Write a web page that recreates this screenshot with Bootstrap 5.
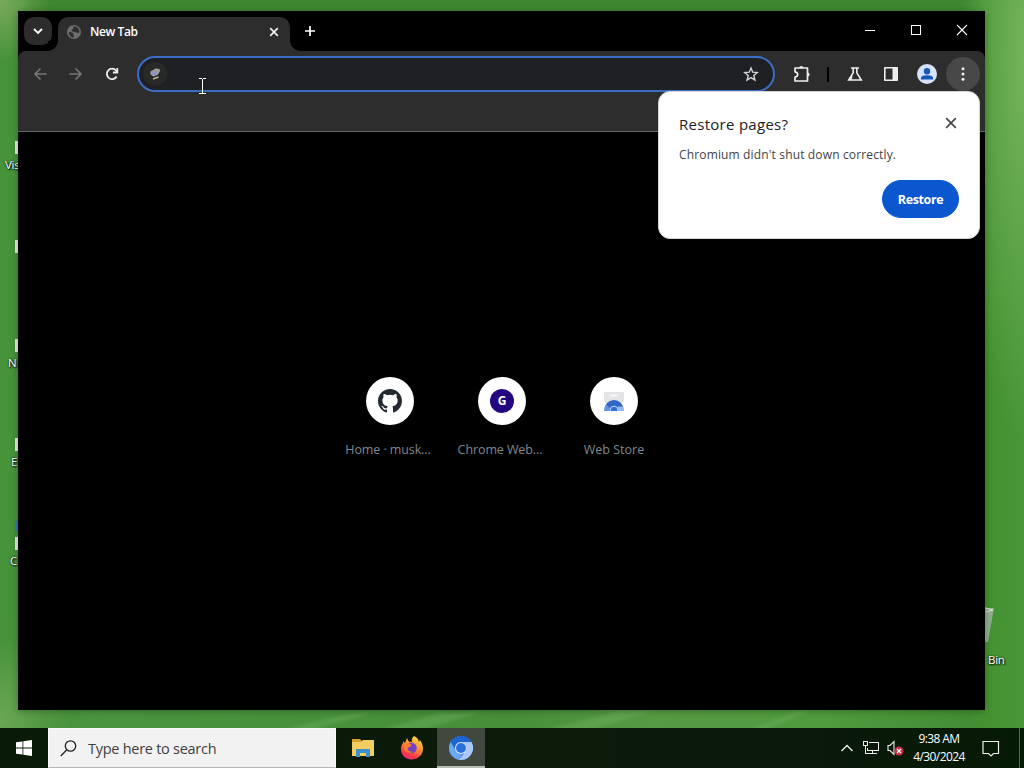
<!DOCTYPE html>
<html lang="en">
<head>
<meta charset="utf-8">
<meta name="viewport" content="width=device-width, initial-scale=1">
<title>New Tab</title>
<link href="https://cdn.jsdelivr.net/npm/bootstrap@5.3.0/dist/css/bootstrap.min.css" rel="stylesheet">
<style>
body{width:1024px;height:768px;font-family:"Open Sans","Noto Sans",sans-serif;font-size:13px;line-height:18px;color:#fff}
svg{display:block;flex:none}
.desktop{width:1024px;height:768px;background:
 radial-gradient(ellipse 50px 60px at 0 0,#7aa95c,transparent),
 radial-gradient(ellipse 65px 380px at 1024px 60px,#74b35b,transparent),
 linear-gradient(90deg,#47933a 0,#47933a 20px,#3f882f 30px,#3f882f 970px,#43902f 985px,#489639 1024px)}
.lower-glow{left:0;top:620px;width:1024px;height:108px;background:
 radial-gradient(ellipse 70px 80px at 0 100px,#6aa654,transparent),
 linear-gradient(90deg,transparent,#4b943f 8%,#478f39 50%,#569a43 64%,#4f9b3e 80%,transparent)}
.window{left:18px;top:11px;width:967px;height:699px;background:#000;box-shadow:0 1px 7px rgba(0,0,0,.3)}
.tabstrip{height:40px;padding:6px 0 0 6px}
.tab-search{width:28px;height:28px;border-radius:10px;background:#2c2c2c}
.active-tab{width:232px;height:34px;margin-left:6px;border-radius:10px 10px 0 0;background:#2d2d2d;padding:0 9px 5px;font-weight:600;font-size:12px}
.active-tab::before,.active-tab::after{content:"";position:absolute;bottom:0;width:10px;height:10px}
.active-tab::before{left:-10px;background:radial-gradient(circle at 0 0,#000 9.5px,#2d2d2d 10px)}
.active-tab::after{right:-10px;background:radial-gradient(circle at 100% 0,#000 9.5px,#2d2d2d 10px)}
.tab-title{letter-spacing:-.42px;margin-left:9px;padding-top:1px}
.toolbar{height:81px;background:#2d2d2d;border-bottom:1px solid #646464;border-radius:8px 8px 0 0}
.tool-row{height:46px;padding:0 5px 0 14px}
.omnibox{width:638px;height:36px;border:2px solid #3b6dc4;border-radius:18px;background:#1e2023;padding:0 14px 0 5px}
.site-chip{width:24px;height:24px;background:#292929}
.menu-btn{width:34px;height:34px;background:#484848}
.bubble{right:5px;top:80px;width:322px;height:148px;border-radius:12px;background:#fff;border:1px solid #d5d5d5;color:#25272a;padding:20px 20px 20px}
.bubble h1{font-size:15px;line-height:24px;font-weight:400;letter-spacing:.28px;margin:0;color:#202124}
.bubble p{font-size:12px;line-height:18px;letter-spacing:.15px;margin:10px 0 16px;color:#404347}
.restore{width:77px;height:38px;padding:2px 0 0;--bs-btn-bg:#0b57d0;--bs-btn-border-color:#0b57d0;--bs-btn-color:#fff;font-size:12.5px;font-weight:700;letter-spacing:-.4px}
.shortcuts{padding-top:245px;margin-left:316px}
.shortcut{width:112px;color:#7f8890;font-size:12.5px}
.shortcut .tight{margin-left:-4px;letter-spacing:-.1px}
.disc{width:48px;height:48px;background:#fff;margin-bottom:16px}
.letter{width:24px;height:24px;background:#240680;color:#fff;font-size:12px;font-weight:700}
.taskbar{left:0;top:728px;width:1024px;height:40px;background:linear-gradient(90deg,#081a08,#0c1b09 45%,#0b190b 75%,#051a05)}
.start{width:48px}
.searchbox{width:288px;background:#f2f2f2;border:1px solid #fafafa;border-bottom-color:#b5b5b5;color:#404040;font-size:14.5px;padding-left:11px}
.searchbox span{margin-left:11px;letter-spacing:-.27px;padding-top:2px}
.task{width:48px}
.task-on{background:#41493f;border-bottom:2px solid #b7bdb6}
.clock{width:60px;font-size:12px;line-height:18px;letter-spacing:-.58px;white-space:nowrap}
.desk-label{font-size:11.5px;line-height:16px;letter-spacing:-.3px;text-shadow:1px 1px 2px #000,0 0 2px #000}
.stub{width:4px;height:13px;background:#e6ece3;left:15px}
</style>
</head>
<body>
<main class="desktop position-relative overflow-hidden">
  <div class="lower-glow position-absolute"></div>
  <svg class="position-absolute" style="left:0;top:706px" width="1024" height="24" viewBox="0 0 1024 24">
    <defs><filter id="soft"><feGaussianBlur stdDeviation="3 1.5"/></filter></defs>
    <path fill="#72b463" opacity=".4" filter="url(#soft)" d="M280 24 350 8h20L310 24zM380 24l60-17h40L420 24zM545 24 620 5h35L590 24zM750 24 795 5h15L765 24z"/>
  </svg>
  <i class="stub position-absolute" style="top:141px"></i><i class="stub position-absolute" style="top:240px"></i><i class="stub position-absolute" style="top:339px"></i><i class="stub position-absolute" style="top:438px"></i><i class="stub position-absolute" style="top:537px"></i>
  <span class="desk-label position-absolute" style="left:5px;top:157px">Vis</span>
  <span class="desk-label position-absolute" style="left:8px;top:355px">N</span>
  <span class="desk-label position-absolute" style="left:11px;top:454px">E</span>
  <span class="desk-label position-absolute" style="left:10px;top:553px">C</span>
  <svg class="position-absolute" style="left:14px;top:515px" width="8" height="22"><circle cx="12" cy="11" r="11" fill="#3478bd"/></svg>
  <svg class="position-absolute" style="left:974px;top:606px" width="22" height="38"><path fill="#8fae8f" d="M0 2h20l-6 34H0z"/><path fill="none" stroke="#dbe7da" d="m8 1 11 3-7 2"/></svg>

  <section class="window position-absolute">
    <header class="tabstrip d-flex align-items-start">
      <div class="tab-search d-flex align-items-center justify-content-center"><svg width="12" height="12" fill="none" stroke="#fff" stroke-width="1.8"><path d="m2 4 4 4 4-4"/></svg></div>
      <div class="active-tab position-relative d-flex align-items-center">
        <svg width="14" height="14" viewBox="0 0 14 14"><circle cx="7" cy="7" r="7" fill="#6c6d6e"/><path fill="#2f2f2f" d="M2 7c3-.2 4.500 1 4.300 2.300-.2 1 .8.900.7 3.200C3.600 12.300 1.500 10 2 7zM6 1.500l3.300.2C11.500 2.800 12.700 5 12.300 7.600 10 8.400 9 7 7 6.800 4.800 6.500 4 5 5.500 4.200 6.700 3.500 6.800 2.700 6 1.500z"/></svg>
        <span class="tab-title me-auto">New Tab</span>
        <svg width="14" height="14" fill="none" stroke="#f1f1f1" stroke-width="1.7"><path d="m3.200 3.200 7.600 7.600m0-7.600-7.600 7.600"/></svg>
      </div>
      <svg width="12" height="12" class="mt-2" style="margin-left:14px" fill="none" stroke="#fff" stroke-width="1.7"><path d="M6 1v10M1 6h10"/></svg>
      <div class="ms-auto d-flex align-items-center" style="gap:34px;padding:7px 17px 0 0">
        <svg width="12" height="12" shape-rendering="crispEdges"><path fill="#fff" d="M1 6h10v1H1z"/></svg>
        <svg width="12" height="12" fill="none" stroke="#fff" shape-rendering="crispEdges"><path d="M1.500 1.500h9v9h-9z"/></svg>
        <svg width="12" height="12" fill="none" stroke="#fff" stroke-width="1.1"><path d="m1 1 10 10M11 1 1 11"/></svg>
      </div>
    </header>
    <div class="toolbar">
      <div class="tool-row d-flex align-items-center">
        <svg width="16" height="16" fill="none" stroke="#777" stroke-width="1.6"><path d="M14.500 8H3m5.500-5.500L3 8l5.500 5.500"/></svg>
        <svg width="16" height="16" style="margin-left:20px" fill="none" stroke="#777" stroke-width="1.6"><path d="M1.500 8H13M7.500 2.500 13 8l-5.500 5.500"/></svg>
        <svg width="16" height="16" style="margin-left:20px" fill="none" stroke="#eee" stroke-width="1.8"><path d="M12.600 10.500A5.200 5.200 0 1 1 12 4.500L13.300 6"/><path d="M13.300 2v4.500H8.900"/></svg>
        <div class="omnibox d-flex align-items-center justify-content-between" style="margin-left:17px">
          <span class="site-chip rounded-circle d-flex align-items-center justify-content-center" style="margin-left:-1px"><svg width="14" height="14" viewBox="0 0 14 14"><path fill="#a3a493" d="m2.500 4.500 5-3 4 .5.500 2-2 3.500-4.500 2-3-2z"/><circle cx="6.500" cy="6" r="2.700" fill="#8d97bd"/><path fill="none" stroke="#b5b496" stroke-width="1.500" d="m5 12 5.500-2"/></svg></span>
          <svg width="16" height="16" viewBox="0 0 16 16" fill="none" stroke="#d3d5d7" stroke-width="1.400" stroke-linejoin="miter"><path d="m8 2 1.750 4.200 4.550.35-3.500 2.950 1.100 4.500L8 11.600 4.100 14l1.100-4.500-3.500-2.950 4.550-.35z"/></svg>
        </div>
        <svg width="18" height="18" viewBox="0 0 18 18" style="margin-left:18px" fill="none" stroke="#eee" stroke-width="1.700"><path stroke-linejoin="round" d="M2 3h12.500v13H2v-3.800q2.700-.5 2.700-2.700T2 6.800z"/><path fill="#eee" stroke="none" d="M6.200 3a2.100 2 0 0 1 4.200 0zM14.500 7.400a2.100 2.100 0 0 1 0 4.200z"/></svg>
        <span style="width:2px;height:15px;background:#000;margin-left:16px"></span>
        <svg width="16" height="16" style="margin-left:18px" fill="none" stroke="#eee" stroke-width="1.600"><path d="M4 2h8M6.200 2v4.800L1.700 14h12.600L9.800 6.800V2M5 10.500l-1.500 3"/></svg>
        <svg width="16" height="16" style="margin-left:20px"><path fill="none" stroke="#eee" stroke-width="1.600" stroke-linejoin="round" d="M1.800 1.800h12.400v12.400H1.800z"/><path fill="#eee" d="M9.500 1.500H14v13H9.500z"/></svg>
        <svg width="20" height="20" style="margin-left:18px"><circle cx="10" cy="10" r="10" fill="#d5e3fb"/><circle cx="10" cy="7.200" r="3.200" fill="#1858bd"/><path fill="#1858bd" d="M4 15.500v-1.800c0-3.300 12-3.300 12 0v1.800z"/></svg>
        <span class="menu-btn rounded-circle d-flex align-items-center justify-content-center ms-auto"><svg width="4" height="16" fill="#eee"><circle cx="2" cy="2.800" r="1.500"/><circle cx="2" cy="8" r="1.500"/><circle cx="2" cy="13.200" r="1.500"/></svg></span>
      </div>
    </div>
    <div class="shortcuts d-flex">
      <div class="shortcut d-flex flex-column align-items-center"><div class="disc rounded-circle d-flex align-items-center justify-content-center"><svg width="24" height="24" viewBox="0 0 16 16" fill="#24292f"><path d="M8 0C3.580 0 0 3.580 0 8c0 3.540 2.290 6.530 5.470 7.590.4.070.55-.17.55-.38 0-.19-.01-.82-.01-1.490-2.010.37-2.530-.49-2.690-.94-.09-.23-.48-.94-.82-1.130-.28-.15-.68-.52-.01-.53.63-.01 1.080.58 1.230.82.72 1.210 1.870.87 2.330.66.07-.52.28-.87.51-1.070-1.780-.2-3.640-.89-3.640-3.950 0-.87.31-1.590.82-2.150-.08-.2-.36-1.020.08-2.120 0 0 .67-.21 2.200.82a7.700 7.700 0 0 1 4 0c1.530-1.040 2.200-.82 2.200-.82.44 1.100.16 1.920.08 2.120.51.56.82 1.270.82 2.150 0 3.070-1.870 3.750-3.650 3.950.29.25.54.73.54 1.480 0 1.070-.01 1.930-.01 2.200 0 .21.15.46.55.38A8 8 0 0 0 16 8c0-4.420-3.580-8-8-8z"/></svg></div><span class="tight">Home · musk...</span></div>
      <div class="shortcut d-flex flex-column align-items-center"><div class="disc rounded-circle d-flex align-items-center justify-content-center"><span class="letter rounded-circle d-flex align-items-center justify-content-center">G</span></div><span class="tight">Chrome Web...</span></div>
      <div class="shortcut d-flex flex-column align-items-center"><div class="disc rounded-circle d-flex align-items-center justify-content-center"><svg width="24" height="24" viewBox="0 0 24 24"><path fill="#e4e4e6" d="M2 3h20v8l-1 3H3l-1-3z"/><rect x="8" y="5.500" width="8" height="2" rx="1" fill="#f8f8f8"/><path fill="#2f66c8" d="M2.500 22v-1.500a9.500 9.500 0 0 1 19 0V22z"/><path fill="#5c95ea" d="M2.500 22v-1.500a9.500 9.500 0 0 1 1.600-5.300L8.500 20v2z"/><path fill="#8fb8f2" d="M15.500 17.500h5.400q.6 1.500.6 4.500H16z"/><path fill="#2f6cd6" stroke="#c3d8f8" d="M8.200 22v-1a3.800 3.800 0 0 1 7.600 0v1"/></svg></div><span>Web Store</span></div>
    </div>
    <aside class="bubble position-absolute">
      <div class="d-flex justify-content-between"><h1>Restore pages?</h1><svg width="14" height="14" style="margin:4px 1px 0 0" fill="none" stroke="#46484a" stroke-width="1.700"><path d="m2.200 2.200 9.600 9.600m0-9.600-9.600 9.600"/></svg></div>
      <p>Chromium didn't shut down correctly.</p>
      <div class="d-flex justify-content-end"><button class="btn restore rounded-pill">Restore</button></div>
    </aside>
  </section>
  <svg class="position-absolute" style="left:197px;top:78px" width="11" height="17" fill="none" stroke="#fff" shape-rendering="crispEdges"><path d="M2 .5h2.500l1 1 1-1H9M5.500 1v14M2 15.500h7"/></svg>

  <footer class="taskbar position-absolute d-flex">
    <div class="start d-flex align-items-center justify-content-center"><svg width="16" height="16" fill="#fff"><path d="m0 2.300 6.500-.9v6.100H0zM7.300 1.300 16 0v7.500H7.300zM0 8.400h6.500v6.200L0 13.700zM7.300 8.400H16V16l-8.700-1.300z"/></svg></div>
    <div class="searchbox d-flex align-items-center"><svg width="17" height="17" fill="none" stroke="#222" stroke-width="1.300"><circle cx="10.500" cy="6" r="5.200"/><path d="M6.800 9.800.8 16"/></svg><span>Type here to search</span></div>
    <div class="task d-flex align-items-center justify-content-center" style="margin-left:3px"><svg width="22" height="20"><path fill="#d99d2e" d="M0 1h8l2 2h11v5H0z"/><path fill="#f3cd62" d="M0 4h9l2-2h11v16H0z"/><path fill="#3c91ca" d="M4 11h14v8h-4v-4H8v4H4z"/></svg></div>
    <div class="task d-flex align-items-center justify-content-center" style="margin-left:1px"><svg width="24" height="24" viewBox="0 0 24 24"><defs><linearGradient id="fox" x1=".8" y1="0" x2=".3" y2="1"><stop stop-color="#ffe34b"/><stop offset=".45" stop-color="#ff9132"/><stop offset=".8" stop-color="#ff3847"/><stop offset="1" stop-color="#e52d7e"/></linearGradient></defs><path fill="url(#fox)" d="M14 0c4 2 4.500 4 5 6l1-2c4 6 4 12 0 16-7 7-19 3-19-7 0-3 1-5 2-6V5l2 2 2-5 2 4c2-.5 3 .5 3.500 1C11 4 12 2 14 0z"/><circle cx="11.500" cy="12" r="5.200" fill="#7140c5"/><path fill="#ff7d30" d="M4 8c4-1 5 0 8 .5L10 11c-2 0-3 1-2 3 1 1.500 3 2 5 1.500-3 3-9 1-9-4z"/></svg></div>
    <div class="task task-on d-flex align-items-center justify-content-center" style="margin-left:1px"><svg width="24" height="24" viewBox="0 0 24 24" style="margin-top:1px"><circle cx="12" cy="12" r="12" fill="#4285e8"/><path fill="#1c65cf" d="M1.600 6A12 12 0 0 1 22.400 6H12a6 6 0 0 0-5.200 9z"/><path fill="#6ca7f3" d="M1.600 6 7 15a6 6 0 0 0 6.500 2.800L10 23.800A12 12 0 0 1 1.600 6z"/><path fill="#aac9f7" d="M12 6h10.400A12 12 0 0 1 10 23.800l7.200-8.800A6 6 0 0 0 12 6z"/><circle cx="12" cy="12" r="6" fill="#dfeafd"/><circle cx="12" cy="12" r="5" fill="#286fdc"/></svg></div>
    <div class="ms-auto d-flex align-items-center">
      <svg width="12" height="8" fill="none" stroke="#f0f0f0" stroke-width="1.300"><path d="m.5 7 5.500-5.500L11.500 7"/></svg>
      <svg width="17" height="16" style="margin-left:10px" fill="none" stroke="#eee" shape-rendering="crispEdges"><path d="M5.500 2.500h10v8h-11v-3M9.500 10.500v3M5 13.500h9M.5 1.500h4v4h-4zM2.500 5.500v8h2"/></svg>
      <svg width="19" height="18" style="margin-left:7px"><path fill="none" stroke="#eee" stroke-width="1.100" d="M1 6.500h2l4-4v13l-4-4H1z"/><circle cx="12" cy="12" r="4.500" fill="#c82f45"/><path stroke="#fff" stroke-width="1.200" d="m10 10 4 4m0-4-4 4"/></svg>
      <div class="clock text-center" style="margin-left:3px"><div>9:38 AM</div><div>4/30/2024</div></div>
      <svg width="18" height="17" style="margin-left:13px" fill="none" stroke="#eee" stroke-width="1.200"><path d="M1 1.500h15.500v12h-5L9 16l-2.500-2.500H1z"/></svg>
      <span class="align-self-stretch" style="margin-left:19px;width:5px;border-left:1px solid #536253"></span>
    </div>
  </footer>
  <span class="desk-label position-absolute" style="left:988px;top:652px">Bin</span>
</main>
<script src="https://cdn.jsdelivr.net/npm/bootstrap@5.3.0/dist/js/bootstrap.bundle.min.js"></script>
</body>
</html>
